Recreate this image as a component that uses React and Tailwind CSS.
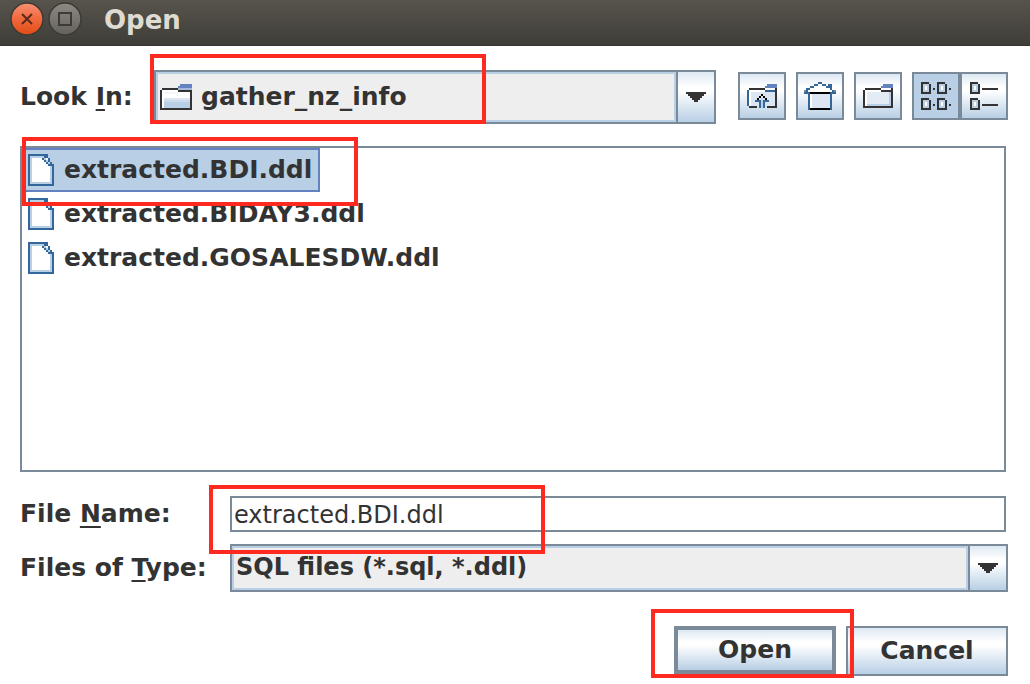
import React from "react";

const BTN =
  "bg-[linear-gradient(to_bottom,#dde8f3_0%,#ffffff_30%,#ffffff_38%,#b8cfe5_100%)] border-[#7a8a99]";

function Px({ w, h, rects, className = "" }) {
  return (
    <svg
      width={w * 2}
      height={h * 2}
      viewBox={`0 0 ${w} ${h}`}
      shapeRendering="crispEdges"
      aria-hidden="true"
      className={`block shrink-0 ${className}`}
    >
      {rects.map(([x, y, rw, rh, fill], i) => (
        <rect key={i} x={x} y={y} width={rw} height={rh} fill={fill} />
      ))}
    </svg>
  );
}

const K = "#333333";
const B = "#336699";
const L = "#b8cfe5";
const T = "#6382bf";

const folder = [
  [1, 3, 14, 9, "#ffffff"],
  [2, 4, 7, 1, "#f3f7fb"],
  [2, 7, 13, 1, "#dbe6f2"],
  [2, 8, 13, 1, "#cbdbec"],
  [2, 9, 13, 3, L],
  [1, 2, 8, 1, K],
  [0, 3, 1, 9, K],
  [0, 12, 16, 1, K],
  [15, 3, 1, 9, K],
  [9, 3, 7, 1, K],
  [10, 0, 6, 1, T],
  [9, 1, 7, 1, T],
  [9, 2, 7, 1, "#a3b8dc"],
];

const newFolder = [
  [1, 3, 13, 8, "#ffffff"],
  [2, 4, 11, 6, "#e3ecf5"],
  [2, 10, 11, 1, L],
  [13, 4, 1, 7, L],
  [1, 2, 8, 1, K],
  [0, 3, 1, 8, K],
  [0, 11, 15, 1, K],
  [14, 3, 1, 8, K],
  [9, 2, 6, 1, "#ffffff"],
  [9, 3, 5, 1, K],
  [10, 0, 5, 1, T],
  [9, 1, 6, 1, T],
  [14, 2, 1, 1, K],
];

const upFolder = [
  [1, 3, 13, 8, "#ffffff"],
  [2, 4, 12, 7, "#dbe6f2"],
  [1, 2, 8, 1, K],
  [0, 3, 1, 8, B],
  [1, 11, 4, 1, K],
  [10, 11, 5, 1, K],
  [14, 4, 1, 7, K],
  [9, 2, 6, 1, "#ffffff"],
  [9, 3, 5, 1, B],
  [14, 2, 1, 2, K],
  [10, 0, 5, 1, T],
  [9, 1, 6, 1, T],
  [7, 5, 1, 1, "#000"],
  [6, 6, 1, 1, "#000"],
  [8, 6, 1, 1, "#000"],
  [5, 7, 1, 1, "#000"],
  [9, 7, 1, 1, "#000"],
  [4, 8, 3, 1, B],
  [8, 8, 3, 1, B],
  [6, 9, 1, 3, B],
  [8, 9, 1, 3, B],
  [7, 7, 1, 5, L],
];

const home = [
  [3, 3, 10, 2, "#ffffff"],
  [5, 2, 6, 1, "#ffffff"],
  [3, 6, 10, 7, "#dbe6f2"],
  [3, 6, 1, 7, "#ffffff"],
  [7, 0, 2, 1, B],
  [5, 1, 2, 1, B],
  [9, 1, 2, 1, B],
  [3, 2, 2, 1, B],
  [11, 2, 1, 1, B],
  [12, 1, 2, 2, B],
  [1, 3, 2, 1, B],
  [13, 3, 1, 1, B],
  [0, 4, 1, 1, "#7a8a99"],
  [1, 4, 1, 1, B],
  [14, 4, 1, 1, B],
  [15, 4, 1, 1, "#7a8a99"],
  [0, 5, 3, 1, B],
  [13, 5, 3, 1, B],
  [2, 5, 1, 9, B],
  [13, 5, 1, 9, B],
  [3, 5, 10, 1, "#000"],
  [3, 13, 10, 1, "#000"],
];

const cell = (x, y) => [
  [x, y, 4, 1, K],
  [x, y, 1, 6, K],
  [x, y + 5, 5, 1, K],
  [x + 4, y + 1, 1, 5, K],
  [x + 1, y + 1, 3, 4, L],
  [x + 2, y + 2, 1, 2, "#ffffff"],
];

const listView = [
  ...cell(0, 0), ...cell(8, 0), ...cell(0, 8), ...cell(8, 8),
  [6, 3, 1, 1, K], [14, 3, 1, 1, K], [6, 11, 1, 1, K], [14, 11, 1, 1, K],
];

const detailView = [...cell(0, 0), ...cell(0, 8), [6, 3, 8, 1, K], [6, 11, 8, 1, K]];

const fileIcon = [
  [1, 1, 9, 14, L],
  [10, 5, 2, 10, L],
  [2, 2, 9, 12, "#ffffff"],
  [10, 2, 1, 2, L],
  [0, 0, 10, 1, B],
  [0, 0, 1, 16, B],
  [0, 15, 13, 1, B],
  [12, 5, 1, 11, B],
  [8, 1, 2, 1, B],
  [7, 2, 1, 1, B],
  [8, 2, 1, 1, L],
  [9, 2, 1, 1, "#ffffff"],
  [10, 2, 1, 1, B],
  [8, 3, 1, 1, B],
  [9, 3, 1, 1, L],
  [10, 3, 1, 1, B],
  [9, 4, 1, 1, B],
  [10, 4, 1, 1, L],
  [11, 4, 1, 1, B],
  [10, 5, 2, 1, B],
];

const arrow = [
  [0, 0, 10, 1, K],
  [1, 1, 8, 1, K],
  [2, 2, 6, 1, K],
  [3, 3, 4, 1, K],
  [4, 4, 2, 1, K],
];

function Mark({ className }) {
  return <span aria-hidden="true" className={`pointer-events-none absolute z-10 border-4 border-[#ff2a1f] ${className}`} />;
}

function Combo({ id, value, icon, className }) {
  return (
    <div className={`relative flex border-2 border-[#7a8a99] ${className}`}>
      <select
        id={id}
        className={`min-w-0 flex-1 appearance-none rounded-none border-2 border-[#b8cfe5] bg-[#eeeeee] font-bold outline-none ${
          icon ? "pl-[43px]" : "pb-0.5 pl-0.5 text-[24px]"
        }`}
      >
        <option>{value}</option>
      </select>
      {icon && <Px w={16} h={13} rects={folder} className="pointer-events-none absolute left-1 top-3" />}
      <span className="pointer-events-none flex w-[38px] items-center justify-center border-l-2 border-[#7a8a99] bg-[linear-gradient(to_bottom,#dde8f3_0%,#ffffff_30%,#ffffff_38%,#b8cfe5_100%)]">
        <Px w={10} h={5} rects={arrow} />
      </span>
    </div>
  );
}

function ToolButton({ label, active, className = "", children }) {
  return (
    <button
      type="button"
      aria-label={label}
      className={`flex size-12 shrink-0 items-center justify-center border-2 ${
        active ? "border-[#7a8a99] bg-[#b8cfe5]" : BTN
      } ${className}`}
    >
      {children}
    </button>
  );
}

const files = ["extracted.BDI.ddl", "extracted.BIDAY3.ddl", "extracted.GOSALESDW.ddl"];

export default function App() {
  return (
    <div className="min-h-screen bg-white font-['DejaVu_Sans',sans-serif] text-[25px] leading-[30px] font-bold text-[#333333]">
      <header className="flex h-[46px] items-start gap-1.5 border-b border-[#35342f] bg-linear-to-b from-[#57544c] to-[#3e3d38] pl-[11px] pt-[3px]">
        <button type="button" aria-label="Close" className="shrink-0">
          <svg width="32" height="32" viewBox="0 0 32 32" className="block overflow-visible">
            <defs>
              <linearGradient id="closeFill" x1="0" y1="0" x2="0" y2="1">
                <stop offset="0" stopColor="#f79175" />
                <stop offset="0.5" stopColor="#f0683c" />
                <stop offset="1" stopColor="#e04c14" />
              </linearGradient>
            </defs>
            <circle cx="16" cy="16" r="16" fill="url(#closeFill)" stroke="#3c3a35" strokeWidth="1.5" />
            <path d="M11 11 21 21M21 11 11 21" stroke="#5b2a18" strokeWidth="2" />
          </svg>
        </button>
        <button type="button" aria-label="Maximize" className="shrink-0">
          <svg width="32" height="32" viewBox="0 0 32 32" className="block overflow-visible">
            <defs>
              <linearGradient id="maxFill" x1="0" y1="0" x2="0" y2="1">
                <stop offset="0" stopColor="#8c8a82" />
                <stop offset="1" stopColor="#63615a" />
              </linearGradient>
            </defs>
            <circle cx="16" cy="16" r="16" fill="url(#maxFill)" stroke="#3c3a35" strokeWidth="1.5" />
            <rect x="10" y="10" width="12" height="12" fill="none" stroke="#3c3a35" strokeWidth="2" />
          </svg>
        </button>
        <h1 className="pl-[17px] pt-0.5 text-[26px] text-[#dfdbd2]">Open</h1>
      </header>

      <main className="px-[22px] pt-6">
        <div className="-ml-0.5 flex items-center">
          <label htmlFor="look-in" className="w-[134px] shrink-0">
            Look <u className="decoration-2 underline-offset-4">I</u>n:
          </label>
          <div className="relative min-w-0 flex-1">
            <Combo id="look-in" value="gather_nz_info" icon className="h-[54px]" />
            <Mark className="-left-1 -top-4 h-[70px] w-[336px]" />
          </div>
          <div className="flex self-start pl-[22px] pt-0.5">
            <ToolButton label="Up One Level"><Px w={15} h={12} rects={upFolder} /></ToolButton>
            <ToolButton label="Home" className="ml-2.5"><Px w={16} h={14} rects={home} /></ToolButton>
            <ToolButton label="Create New Folder" className="ml-2.5"><Px w={15} h={12} rects={newFolder} /></ToolButton>
            <ToolButton label="List" active className="ml-2.5"><Px w={15} h={14} rects={listView} /></ToolButton>
            <ToolButton label="Details"><Px w={14} h={14} rects={detailView} /></ToolButton>
          </div>
        </div>

        <div className="relative -ml-0.5 mr-0.5 mt-[22px]">
          <ul className="h-[326px] border-2 border-[#7a8a99]">
            {files.map((name, i) => (
              <li key={name} className="flex">
                <button
                  type="button"
                  aria-pressed={i === 0}
                  className={`flex h-11 items-center gap-2.5 border-2 pl-1 pr-1.5 ${
                    i === 0 ? "border-[#6382bf] bg-[#b8cfe5]" : "border-transparent"
                  }`}
                >
                  <Px w={13} h={16} rects={fileIcon} />
                  <span>{name}</span>
                </button>
              </li>
            ))}
          </ul>
          <Mark className="-top-[9px] left-0.5 h-[69px] w-[336px]" />
        </div>

        <div className="relative -ml-0.5 mr-0.5 mt-6 flex items-center">
          <label htmlFor="file-name" className="w-[210px] shrink-0">
            File <u className="decoration-2 underline-offset-4">N</u>ame:
          </label>
          <input
            id="file-name"
            type="text"
            defaultValue="extracted.BDI.ddl"
            className="h-9 min-w-0 flex-1 border-2 border-[#7a8a99] bg-white px-0.5 pt-0.5 text-[24px] font-normal outline-none"
          />
          <Mark className="-top-[11px] left-[189px] h-[69px] w-[336px]" />
        </div>

        <div className="-ml-0.5 mt-3 flex items-center">
          <label htmlFor="file-type" className="w-[210px] shrink-0">
            Files of <u className="decoration-2 underline-offset-4">T</u>ype:
          </label>
          <Combo id="file-type" value="SQL files (*.sql, *.ddl)" className="h-12 min-w-0 flex-1" />
        </div>

        <div className="mt-[34px] flex justify-end gap-2.5">
          <div className="relative">
            <button type="button" className={`block h-12 w-[162px] border-4 ${BTN}`}>Open</button>
            <Mark className="-left-[23px] -top-[17px] h-[69px] w-[203px]" />
          </div>
          <button type="button" className={`h-[50px] w-[162px] border-2 ${BTN}`}>Cancel</button>
        </div>
      </main>
    </div>
  );
}
